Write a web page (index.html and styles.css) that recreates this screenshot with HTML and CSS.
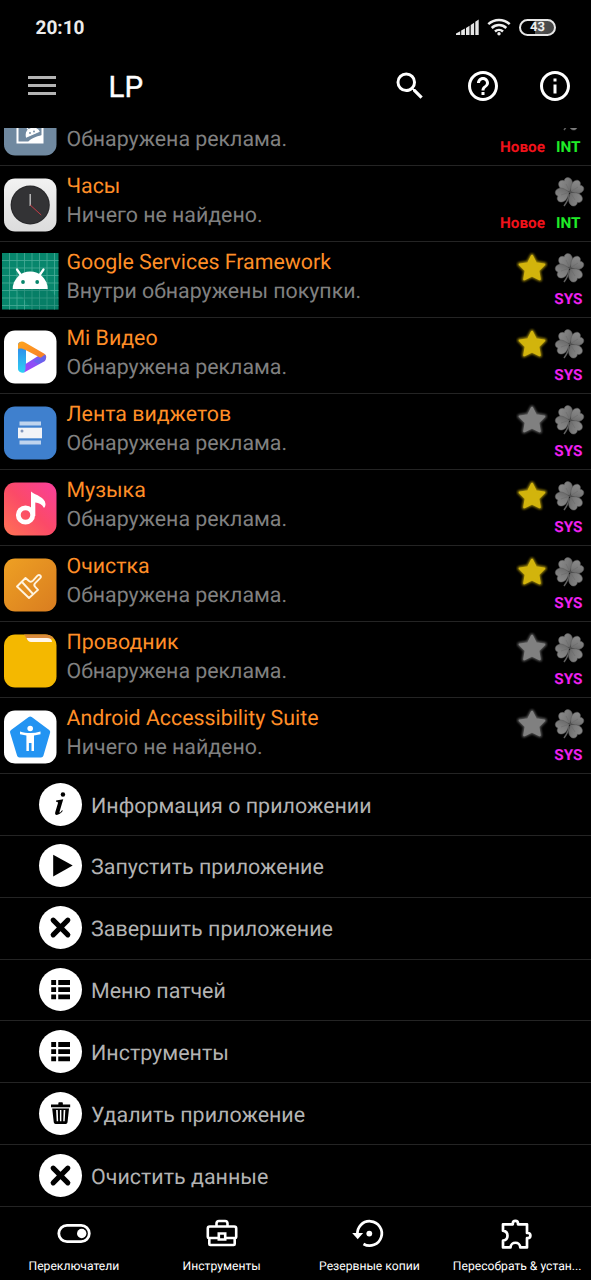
FILE: index.html
```html
<!DOCTYPE html>
<html lang="ru">
<head>
<meta charset="utf-8">
<title>LP</title>
<link rel="stylesheet" href="styles.css">
</head>
<body>
<svg class="defs" width="0" height="0" aria-hidden="true">
  <defs>
    <linearGradient id="leaf" x1="0" y1="0" x2="1" y2="1"><stop offset="0" stop-color="#8c8c8c"/><stop offset=".5" stop-color="#7c7c7c"/><stop offset="1" stop-color="#606060"/></linearGradient>
    <linearGradient id="clockface" x1="0" y1="0" x2="0" y2="1"><stop offset="0" stop-color="#f2f2f2"/><stop offset="1" stop-color="#dcdcdc"/></linearGradient>
    <linearGradient id="cyan" x1="0" y1="0" x2="0" y2="1"><stop offset="0" stop-color="#2f7fe8"/><stop offset="1" stop-color="#2fd0f4"/></linearGradient>
    <linearGradient id="orange" x1="0" y1="0" x2="1" y2="1"><stop offset="0" stop-color="#ffa51c"/><stop offset="1" stop-color="#f77a2c"/></linearGradient>
    <linearGradient id="purple" x1="0" y1="1" x2="1" y2="0"><stop offset="0" stop-color="#a93dfb"/><stop offset="1" stop-color="#6a63f0"/></linearGradient>
    <linearGradient id="music" x1="0" y1="1" x2="1" y2="0"><stop offset="0" stop-color="#ff7354"/><stop offset=".5" stop-color="#fb4a68"/><stop offset="1" stop-color="#f93f9c"/></linearGradient>
    <linearGradient id="clean" x1="0" y1="0" x2="1" y2="1"><stop offset="0" stop-color="#eea023"/><stop offset="1" stop-color="#d97d20"/></linearGradient>
    <filter id="glow" x="-30%" y="-30%" width="160%" height="160%"><feGaussianBlur stdDeviation="1"/></filter>
    <symbol id="clover" viewBox="0 0 32 32">
      <path d="M15 18c0 5-2 8-5 12" fill="none" stroke="#606060" stroke-width="1.500"/>
      <g fill="url(#leaf)" stroke="#5a5a5a" stroke-width=".5">
        <path transform="translate(15.600 15.500) rotate(-27)" d="M0 0C-3-2.500-7-4.500-7-9C-7-13.500-2.500-15.200 0-12C2.500-15.200 7-13.500 7-9C7-4.500 3-2.500 0 0z"/>
        <path transform="translate(16.500 15.500) rotate(57)" d="M0 0C-3-2.500-6.700-4.500-6.700-9C-6.700-13-2.500-14.800 0-11.500C2.500-14.800 6.700-13 6.700-9C6.700-4.500 3-2.500 0 0z"/>
        <path transform="translate(16.500 16.500) rotate(145)" d="M0 0C-3-2.500-7-4.500-7-9C-7-13.500-2.500-15.200 0-12C2.500-15.200 7-13.500 7-9C7-4.500 3-2.500 0 0z"/>
        <path transform="translate(15.400 16.300) rotate(-108)" d="M0 0C-3-2.500-7-4.500-7-9C-7-13.500-2.500-15.200 0-12C2.500-15.200 7-13.500 7-9C7-4.500 3-2.500 0 0z"/>
      </g>
      <path d="M16 16L12 8M16 16L24 11M16 16L21 24M16 16L7 19" stroke="#686868" stroke-width=".5"/>
    </symbol>
    <symbol id="star" viewBox="0 0 32 32">
      <g fill="currentColor" stroke="currentColor" stroke-linejoin="round">
        <path opacity=".7" filter="url(#glow)" stroke-width="4" d="M16 3.500l3.900 7.300 8.900 1.500-6.300 6.200 1.500 9L16 23.800l-8 3.700 1.500-9-6.300-6.200 8.900-1.500z"/>
        <path stroke-width="2.200" d="M16 3.800l3.900 7.500 8.300 1.300-5.900 6 1.400 8.600L16 23.500l-7.700 3.700 1.400-8.600-5.900-6 8.300-1.300z"/>
      </g>
    </symbol>
    <symbol id="cross" viewBox="0 0 44 44"><path d="M14.700 14.700l15 15M29.700 14.700l-15 15" stroke="#000" stroke-width="5.200" stroke-linecap="round" transform="translate(-.2 -.2)"/></symbol>
    <symbol id="rows" viewBox="0 0 44 44"><path d="M12.500 12.300h5v5h-5zM19.700 12.300h12v5h-12zM12.500 19.600h5v5h-5zM19.700 19.600h12v5h-12zM12.500 27h5v5h-5zM19.700 27h12v5h-12z"/></symbol>
  </defs>
</svg>
<div class="screen">
  <header class="status">
    <span class="time">20:10</span>
    <div class="indicators">
      <svg width="23" height="17" viewBox="0 0 23 17" fill="#e6e6e6"><path d="M0 16v-1.500l4.200-2.300V16zM5.200 11.500l3.700-2V16H5.200zM10 9l3.500-2.300V16H10zM14.700 6l3.400-2.300V16h-3.400zM19.300 2.800l3.400-2.200V16h-3.400z"/></svg>
      <svg width="24" height="18" viewBox="0 0 24 18" fill="none" stroke="#eee" stroke-width="2.500"><path d="M1.300 6.200a15.500 15.500 0 0 1 21.400 0M4.700 10a10.600 10.600 0 0 1 14.600 0M8 13.500a5.800 5.800 0 0 1 8 0"/><circle cx="12" cy="15.700" r="1.700" fill="#eee" stroke="none"/></svg>
      <span class="battery">43</span>
    </div>
  </header>
  <nav class="toolbar">
    <svg width="28" height="21" viewBox="0 0 28 21" fill="#b4b4b4"><path d="M0 0h28v3H0zM0 8h28v3H0zM0 16h28v3H0z"/></svg>
    <h1 class="title">LP</h1>
    <div class="actions">
      <svg width="36" height="36" viewBox="0 0 24 24" fill="#fff"><path d="M15.500 14h-.79l-.28-.27A6.471 6.471 0 0 0 16 9.500 6.500 6.500 0 1 0 9.500 16c1.610 0 3.090-.59 4.230-1.570l.27.28v.79l5 4.990L20.490 19l-4.990-5zm-6 0C7.010 14 5 11.990 5 9.500S7.010 5 9.500 5 14 7.010 14 9.500 11.990 14 9.500 14z"/></svg>
      <svg width="36" height="36" viewBox="0 0 24 24" fill="#fff"><path d="M11 18h2v-2h-2v2zm1-16C6.480 2 2 6.480 2 12s4.480 10 10 10 10-4.480 10-10S17.520 2 12 2zm0 18c-4.410 0-8-3.590-8-8s3.590-8 8-8 8 3.590 8 8-3.590 8-8 8zm0-14c-2.210 0-4 1.790-4 4h2c0-1.100.9-2 2-2s2 .9 2 2c0 2-3 1.750-3 5h2c0-2.250 3-2.500 3-5 0-2.210-1.790-4-4-4z"/></svg>
      <svg width="36" height="36" viewBox="0 0 24 24" fill="#fff"><path d="M11 7h2v2h-2zm0 4h2v6h-2zm1-9C6.480 2 2 6.480 2 12s4.480 10 10 10 10-4.480 10-10S17.520 2 12 2zm0 18c-4.410 0-8-3.590-8-8s3.590-8 8-8 8 3.590 8 8-3.590 8-8 8z"/></svg>
    </div>
  </nav>

  <main class="list">
    <article class="app">
      <svg class="app-icon" viewBox="0 0 60 60"><rect x="4" y="3.500" width="52.500" height="53" rx="11" fill="#7089a0"/><path d="M17.500 18v25.500h25V18z" fill="none" stroke="#fff" stroke-width="2"/><path d="M28.500 42.500c3-3.500 7-4.500 13.500-6.500v7.500H28z" fill="#fff"/><path d="M26.500 38c-1-5 1.500-7.500 5-8.500s6.500.5 7.500 3zM28.500 31l-2-3M36 29v-3" fill="#fff" stroke="#fff" stroke-width="1.200"/><g fill="#7089a0"><circle cx="30" cy="34" r=".9"/><circle cx="34" cy="32.500" r=".9"/></g></svg>
      <div class="info"><p class="desc last">Обнаружена реклама.</p></div>
      <div class="side"><div class="marks"><svg class="mark"><use href="#clover"/></svg></div><div class="tags"><span class="new">Новое</span><span class="int">INT</span></div></div>
    </article>
    <article class="app">
      <svg class="app-icon" viewBox="0 0 60 60"><rect x="4" y="3.500" width="52.500" height="53" rx="11" fill="url(#clockface)"/><circle cx="30.200" cy="30" r="19.600" fill="#29292b"/><circle cx="30.200" cy="30" r="18.500" fill="#333335"/><path d="M30.200 31V19" stroke="#ccc" stroke-width="1.300"/><path d="M30.200 30l11 10" stroke="#c43a45" stroke-width="1"/></svg>
      <div class="info"><h2 class="name">Часы</h2><p class="desc">Ничего не найдено.</p></div>
      <div class="side"><div class="marks"><svg class="mark"><use href="#clover"/></svg></div><div class="tags"><span class="new">Новое</span><span class="int">INT</span></div></div>
    </article>
    <article class="app">
      <svg class="app-icon" viewBox="0 0 60 60"><path fill="#07866c" d="M2 2h56.500v56.500H2z"/><path d="M9.500 2v56.500M17 2v56.500M24.500 2v56.500M32 2v56.500M39.500 2v56.500M47 2v56.500M54.500 2v56.500M2 9.500h56.500M2 17h56.500M2 24.500h56.500M2 32h56.500M2 39.500h56.500M2 47h56.500M2 54.500h56.500" stroke="#4aac98" stroke-width=".8"/><path d="M16 38h33l9.500 10v10.500H32z" fill="#06705b" opacity=".35"/><path d="M12.700 38a17.500 17.500 0 0 1 35 0z" fill="#fff"/><path d="M17 18.500l4.500 6.500M43.500 18.500L39 25" stroke="#fff" stroke-width="2.200" stroke-linecap="round"/><circle cx="23" cy="31" r="1.900" fill="#07866c"/><circle cx="37.200" cy="31" r="1.900" fill="#07866c"/></svg>
      <div class="info"><h2 class="name">Google Services Framework</h2><p class="desc">Внутри обнаружены покупки.</p></div>
      <div class="side"><div class="marks"><svg class="mark gold"><use href="#star"/></svg><svg class="mark"><use href="#clover"/></svg></div><div class="tags"><span class="sys">SYS</span></div></div>
    </article>
    <article class="app">
      <svg class="app-icon" viewBox="0 0 60 60"><rect x="4" y="3.500" width="52.500" height="53" rx="11" fill="#fff"/><path d="M18 18c0-2 1-3 3-3l5 5v23c-1 3-4 3.500-6 2-1-.7-2-1.700-2-3z" fill="url(#cyan)"/><path d="M25.500 37l15-9.500c4 0 6.500 3.500 4.500 6.500L24 45.500c2-2 1.500-5 1.500-8.500z" fill="url(#purple)"/><path d="M18 18c.5-3.500 4-4.500 7-2.500L44 26.500c3 2 3 5 0 7-1.500-1-2.500-2-4-3L25.500 23c-2-1-5-2-7.500-1z" fill="url(#orange)"/><path d="M41 30.500l4-3c1.500 1.500 1.500 4.500-.5 6l-6 3.500-5-3z" fill="#6664ed"/></svg>
      <div class="info"><h2 class="name">Mi Видео</h2><p class="desc">Обнаружена реклама.</p></div>
      <div class="side"><div class="marks"><svg class="mark gold"><use href="#star"/></svg><svg class="mark"><use href="#clover"/></svg></div><div class="tags"><span class="sys">SYS</span></div></div>
    </article>
    <article class="app">
      <svg class="app-icon" viewBox="0 0 60 60"><rect x="4" y="3.500" width="52.500" height="53" rx="11" fill="#3f80ce"/><path d="M19.500 18.500H41v4H19.500zM19.500 37.500H41v4H19.500z" fill="#bfd4ee"/><path d="M18 24.700h24v10.600H18z" fill="#f1f3f7"/><circle cx="22" cy="28" r="1.500" fill="#8296ba"/></svg>
      <div class="info"><h2 class="name">Лента виджетов</h2><p class="desc">Обнаружена реклама.</p></div>
      <div class="side"><div class="marks"><svg class="mark grey"><use href="#star"/></svg><svg class="mark"><use href="#clover"/></svg></div><div class="tags"><span class="sys">SYS</span></div></div>
    </article>
    <article class="app">
      <svg class="app-icon" viewBox="0 0 60 60"><rect x="4" y="3.500" width="52.500" height="53" rx="11" fill="url(#music)"/><circle cx="25.500" cy="36" r="7.200" fill="none" stroke="#fff" stroke-width="4.800"/><path d="M31 12.500c5 4 14 5.500 14.500 12.500 0 2-.7 3-1.500 4-2-4-5-5-8.700-5.500V37h-4.300z" fill="#fff"/></svg>
      <div class="info"><h2 class="name">Музыка</h2><p class="desc">Обнаружена реклама.</p></div>
      <div class="side"><div class="marks"><svg class="mark gold"><use href="#star"/></svg><svg class="mark"><use href="#clover"/></svg></div><div class="tags"><span class="sys">SYS</span></div></div>
    </article>
    <article class="app">
      <svg class="app-icon" viewBox="0 0 60 60"><rect x="4" y="3.500" width="52.500" height="53" rx="11" fill="url(#clean)"/><g fill="none" stroke="#fff4df" stroke-width="1.900" stroke-linejoin="round"><path d="M17 31.500l8.500-8.500 3.500 3c1.500 1.200 3 .7 4-.3l4.500-5c2-2 4.500.5 2.700 2.500l-5 5c-1 1-1.200 2.500 0 3.700l2.800 3L29 43z"/><path d="M22 27l11 12"/></g></svg>
      <div class="info"><h2 class="name">Очистка</h2><p class="desc">Обнаружена реклама.</p></div>
      <div class="side"><div class="marks"><svg class="mark gold"><use href="#star"/></svg><svg class="mark"><use href="#clover"/></svg></div><div class="tags"><span class="sys">SYS</span></div></div>
    </article>
    <article class="app">
      <svg class="app-icon" viewBox="0 0 60 60"><rect x="4" y="3.500" width="52.500" height="53" rx="11" fill="#f4b800"/><path d="M24 3.500h21c4 0 7.500 2 9 4l-27 1.500c-1-2-1.500-4-3-5.500z" fill="#d98a3c"/><path d="M26.500 7H47c3 0 5 1.500 5 4H31c-2 0-3.500-1.500-4.500-4z" fill="#fff6ea"/></svg>
      <div class="info"><h2 class="name">Проводник</h2><p class="desc">Обнаружена реклама.</p></div>
      <div class="side"><div class="marks"><svg class="mark grey"><use href="#star"/></svg><svg class="mark"><use href="#clover"/></svg></div><div class="tags"><span class="sys">SYS</span></div></div>
    </article>
    <article class="app">
      <svg class="app-icon" viewBox="0 0 60 60"><rect x="4" y="3.500" width="52.500" height="53" rx="11" fill="#fff"/><path d="M30.200 12L47.700 25 41 48H19.500L12.500 25z" fill="#2394f2" stroke="#2394f2" stroke-width="5" stroke-linejoin="round"/><circle cx="30.200" cy="21.500" r="2.800" fill="#fff"/><path d="M20 24.500c7 2 13.500 2 20.500 0v2.700l-6.500 1.300V44h-2.500v-8h-2.600v8h-2.500V28.500L20 27.200z" fill="#fff"/></svg>
      <div class="info"><h2 class="name">Android Accessibility Suite</h2><p class="desc">Ничего не найдено.</p></div>
      <div class="side"><div class="marks"><svg class="mark grey"><use href="#star"/></svg><svg class="mark"><use href="#clover"/></svg></div><div class="tags"><span class="sys">SYS</span></div></div>
    </article>

    <ul class="menu">
      <li class="item"><svg class="disc" viewBox="0 0 44 44"><circle cx="24.500" cy="11.800" r="2.300"/><path d="M17.500 17.900l7.300-1.300-3.700 12.600c-.5 1.700.3 1.700 2.500-1.400l.8.700c-3 4.500-9.200 6-7.700 1.300l2.600-8.700c.4-1.400-.1-1.900-1.900-1.900z"/></svg><span>Информация о приложении</span></li>
      <li class="item"><svg class="disc" viewBox="0 0 44 44"><path d="M14.500 11v22.200L34.500 22z"/></svg><span>Запустить приложение</span></li>
      <li class="item"><svg class="disc"><use href="#cross"/></svg><span>Завершить приложение</span></li>
      <li class="item"><svg class="disc"><use href="#rows"/></svg><span>Меню патчей</span></li>
      <li class="item"><svg class="disc"><use href="#rows"/></svg><span>Инструменты</span></li>
      <li class="item"><svg class="disc" viewBox="0 0 44 44"><path d="M12.300 12.800h7.500v-1.500q0-.8.800-.8h3q.8 0 .8.800v1.500h7.500v2.900H12.300z"/><path fill-rule="evenodd" d="M13.500 17h17.200l-1.500 14q-.2 1.700-1.900 1.700H17q-1.700 0-1.900-1.700zM17.500 18.500l.6 11.500h1.500l-.4-11.500zM21.400 18.500V30h1.500V18.500zM25.200 18.500L24.800 30h1.500l.6-11.500z"/></svg><span>Удалить приложение</span></li>
      <li class="item"><svg class="disc"><use href="#cross"/></svg><span>Очистить данные</span></li>
    </ul>
  </main>

  <footer class="tabs">
    <a class="tab"><svg width="34" height="34" viewBox="0 0 34 34"><rect x="1.800" y="9.300" width="30.500" height="16.400" rx="8.200" fill="none" stroke="#fff" stroke-width="2.800"/><circle cx="24.700" cy="17.500" r="4.700" fill="#fff"/></svg><span>Переключатели</span></a>
    <a class="tab"><svg width="34" height="34" viewBox="0 0 34 34" fill="none" stroke="#fff" stroke-width="2.600"><path d="M11.500 10.500V7.500q0-2.500 2.500-2.500h6q2.500 0 2.500 2.500v3M13.500 22H3.800q-1 0-1-1V12.500q0-2 2-2h24.400q2 0 2 2V21q0 1-1 1h-9.700M4.300 22v6q0 1 1 1h23.400q1 0 1-1v-6"/><path d="M13.800 17.500h6.400v6h-6.400z"/></svg><span>Инструменты</span></a>
    <a class="tab"><svg width="34" height="34" viewBox="0 0 34 34"><path d="M5.500 19A12.200 12.200 0 1 1 11.500 28" fill="none" stroke="#fff" stroke-width="2.700"/><path d="M.2 16.900h10.900l-5.400 6.300z" fill="#fff"/><circle cx="17.300" cy="17.600" r="2.900" fill="#fff"/></svg><span>Резервные копии</span></a>
    <a class="tab"><svg width="34" height="34" viewBox="0 0 34 34" fill="none" stroke="#fff" stroke-width="2.700" stroke-linejoin="round"><path d="M3 8.300h9.800V7.500a2.600 2.600 0 0 1 5.200 0v.8h9V17h.8a2.600 2.600 0 0 1 0 5.200H27v9.200h-6.700c-.3-6.200-9.500-6.200-9.800 0H3v-6.700c6-1 6-9 0-10z"/></svg><span>Пересобрать &amp; устан...</span></a>
  </footer>
</div>
</body>
</html>
```
FILE: styles.css
```css
* { box-sizing: border-box; }
body { margin: 0; background: #000; font-family: Roboto, sans-serif; color: #fff; text-rendering: geometricPrecision; }
svg { display: block; flex: none; }
.defs { position: absolute; }
.screen { display: flex; flex-direction: column; height: 1280px; width: 591px; overflow: hidden; }

.status { height: 54px; flex: none; display: flex; align-items: center; justify-content: space-between; padding: 0 35px 0 35.500px; }
.time { font-size: 19px; font-weight: 700; color: #ececec; }
.indicators { display: flex; align-items: center; gap: 8px; }
.battery { width: 37px; height: 17px; border: 2px solid #e6e6e6; border-radius: 9px; background: linear-gradient(90deg, #000 42%, #555 42%, #444 100%); font-size: 13px; line-height: 14px; font-weight: 700; text-align: center; color: #eee; }

.toolbar { height: 74px; flex: none; display: flex; align-items: center; padding: 0 18px 10px 28px; }
.title { margin: 4px 0 0 52.500px; font-size: 29.500px; line-height: 36px; font-weight: 400; -webkit-text-stroke: .4px #fff; }
.actions { margin-left: auto; display: flex; gap: 36.500px; }

.list { height: 1079px; flex: none; overflow: hidden; display: flex; flex-direction: column; justify-content: flex-end; }
.app { height: 76px; flex: none; display: flex; border-bottom: 1px solid #242424; }
.app-icon { width: 60px; height: 60px; margin-top: 9px; }
.info { flex: 1; padding: 6px 0 0 6.500px; }
.name, .desc { margin: 0; font-size: 21.330px; line-height: 29px; font-weight: 400; white-space: nowrap; }
.name { color: #ff8e27; }
.desc { color: #808080; }
.last { margin-top: 29px; }
.side { padding: 10px 5px 0 0; display: flex; flex-direction: column; align-items: flex-end; }
.marks { display: flex; gap: 6px; }
.mark { width: 32px; height: 32px; }
.gold { color: #d2b40c; }
.grey { color: #808080; }
.tags { display: flex; gap: 11px; margin: 5px 5.500px 0 0; font-size: 15.300px; line-height: 20px; font-weight: 700; }
.sys { color: #ee20ee; margin-right: -2px; }
.new { color: #f0121b; }
.int { color: #1fec28; }

.menu { list-style: none; margin: 0; padding: 0; flex: none; }
.item { height: 61.857px; display: flex; align-items: center; gap: 9px; padding-left: 39px; border-bottom: 1px solid #242424; font-size: 21.450px; color: #b3b3b3; }
.item span { padding-top: 3px; }
.disc { width: 43px; height: 43px; border-radius: 50%; background: #fff; margin-bottom: 1px; }

.tabs { flex: 1; display: grid; grid-template-columns: repeat(4, minmax(0, 1fr)); }
.tab { display: flex; flex-direction: column; align-items: center; padding: 9px 0 0; font-size: 12.150px; line-height: 18px; white-space: nowrap; }
.tab svg { margin-bottom: 7px; }
```
